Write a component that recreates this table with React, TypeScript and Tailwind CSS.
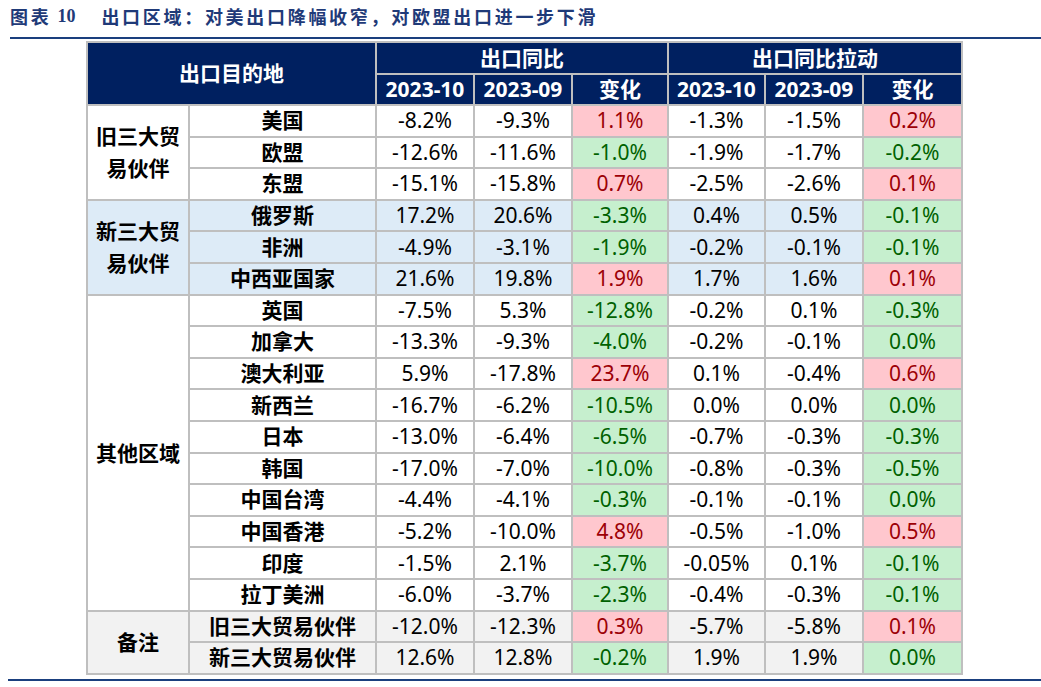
import React from "react";

type Tone = "up" | "down";
type Row = { name: string; v: [string, string, string, string, string, string]; t: [Tone, Tone] };

const up: Tone = "up";
const dn: Tone = "down";

const groups: { label: React.ReactNode; bg: string; rows: Row[] }[] = [
  {
    label: (
      <>
        旧三大贸
        <br />
        易伙伴
      </>
    ),
    bg: "bg-white",
    rows: [
      { name: "美国", v: ["-8.2%", "-9.3%", "1.1%", "-1.3%", "-1.5%", "0.2%"], t: [up, up] },
      { name: "欧盟", v: ["-12.6%", "-11.6%", "-1.0%", "-1.9%", "-1.7%", "-0.2%"], t: [dn, dn] },
      { name: "东盟", v: ["-15.1%", "-15.8%", "0.7%", "-2.5%", "-2.6%", "0.1%"], t: [up, up] },
    ],
  },
  {
    label: (
      <>
        新三大贸
        <br />
        易伙伴
      </>
    ),
    bg: "bg-[#ddebf7]",
    rows: [
      { name: "俄罗斯", v: ["17.2%", "20.6%", "-3.3%", "0.4%", "0.5%", "-0.1%"], t: [dn, dn] },
      { name: "非洲", v: ["-4.9%", "-3.1%", "-1.9%", "-0.2%", "-0.1%", "-0.1%"], t: [dn, dn] },
      { name: "中西亚国家", v: ["21.6%", "19.8%", "1.9%", "1.7%", "1.6%", "0.1%"], t: [up, up] },
    ],
  },
  {
    label: "其他区域",
    bg: "bg-white",
    rows: [
      { name: "英国", v: ["-7.5%", "5.3%", "-12.8%", "-0.2%", "0.1%", "-0.3%"], t: [dn, dn] },
      { name: "加拿大", v: ["-13.3%", "-9.3%", "-4.0%", "-0.2%", "-0.1%", "0.0%"], t: [dn, dn] },
      { name: "澳大利亚", v: ["5.9%", "-17.8%", "23.7%", "0.1%", "-0.4%", "0.6%"], t: [up, up] },
      { name: "新西兰", v: ["-16.7%", "-6.2%", "-10.5%", "0.0%", "0.0%", "0.0%"], t: [dn, dn] },
      { name: "日本", v: ["-13.0%", "-6.4%", "-6.5%", "-0.7%", "-0.3%", "-0.3%"], t: [dn, dn] },
      { name: "韩国", v: ["-17.0%", "-7.0%", "-10.0%", "-0.8%", "-0.3%", "-0.5%"], t: [dn, dn] },
      { name: "中国台湾", v: ["-4.4%", "-4.1%", "-0.3%", "-0.1%", "-0.1%", "0.0%"], t: [dn, dn] },
      { name: "中国香港", v: ["-5.2%", "-10.0%", "4.8%", "-0.5%", "-1.0%", "0.5%"], t: [up, up] },
      { name: "印度", v: ["-1.5%", "2.1%", "-3.7%", "-0.05%", "0.1%", "-0.1%"], t: [dn, dn] },
      { name: "拉丁美洲", v: ["-6.0%", "-3.7%", "-2.3%", "-0.4%", "-0.3%", "-0.1%"], t: [dn, dn] },
    ],
  },
  {
    label: "备注",
    bg: "bg-[#f2f2f2]",
    rows: [
      { name: "旧三大贸易伙伴", v: ["-12.0%", "-12.3%", "0.3%", "-5.7%", "-5.8%", "0.1%"], t: [up, up] },
      { name: "新三大贸易伙伴", v: ["12.6%", "12.8%", "-0.2%", "1.9%", "1.9%", "0.0%"], t: [dn, dn] },
    ],
  },
];

const cell = "border-2 border-[#bfbfbf] text-center align-middle p-0 whitespace-nowrap";

function ChangeCell({ value, tone }: { value: string; tone: Tone }) {
  const cls = tone === "up" ? "bg-[#ffc7ce] text-[#9c0006]" : "bg-[#c6efce] text-[#006100]";
  return <td className={`${cell} ${cls}`}>{value}</td>;
}

export default function App() {
  return (
    <div
      className="w-[1041px] h-[687px] bg-white overflow-hidden"
      style={{ fontFamily: '"Noto Sans", "Noto Sans CJK SC", sans-serif' }}
    >
      {/* Title */}
      <div className="h-[37px] pl-[10px] pt-[4px] flex items-start text-[18px] font-bold text-[#1f3a78] tracking-[2.7px] leading-[24px] font-['Noto_Sans_CJK_SC',sans-serif]">
        <span>图表</span>
        <span className="ml-[6px] font-['Liberation_Serif',serif] tracking-normal">10</span>
        <span className="ml-[26px]">出口区域：对美出口降幅收窄，对欧盟出口进一步下滑</span>
      </div>
      <div className="ml-[10px] h-[2px] bg-[#1a3f7e]" />

      <table className="ml-[86px] mt-[2px] border-collapse table-fixed text-[21px] leading-none text-black">
        <colgroup>
          <col className="w-[102px]" />
          <col className="w-[187px]" />
          <col className="w-[98px]" />
          <col className="w-[98px]" />
          <col className="w-[96px]" />
          <col className="w-[97px]" />
          <col className="w-[98px]" />
          <col className="w-[99px]" />
        </colgroup>
        <thead className="bg-[#002060] text-white font-bold">
          <tr className="h-[32px]">
            <th colSpan={2} rowSpan={2} className={cell}>
              出口目的地
            </th>
            <th colSpan={3} className={cell}>
              出口同比
            </th>
            <th colSpan={3} className={cell}>
              出口同比拉动
            </th>
          </tr>
          <tr className="h-[31px]">
            <th className={cell}>2023-10</th>
            <th className={cell}>2023-09</th>
            <th className={cell}>变化</th>
            <th className={cell}>2023-10</th>
            <th className={cell}>2023-09</th>
            <th className={cell}>变化</th>
          </tr>
        </thead>
        <tbody>
          {groups.map((g, gi) =>
            g.rows.map((r, ri) => (
              <tr key={`${gi}-${ri}`} className={`h-[31.6px] ${g.bg}`}>
                {ri === 0 && (
                  <td rowSpan={g.rows.length} className={`${cell} font-bold leading-[32px]`}>
                    {g.label}
                  </td>
                )}
                <td className={`${cell} font-bold`}>{r.name}</td>
                <td className={cell}>{r.v[0]}</td>
                <td className={cell}>{r.v[1]}</td>
                <ChangeCell value={r.v[2]} tone={r.t[0]} />
                <td className={cell}>{r.v[3]}</td>
                <td className={cell}>{r.v[4]}</td>
                <ChangeCell value={r.v[5]} tone={r.t[1]} />
              </tr>
            ))
          )}
        </tbody>
      </table>

      <div className="ml-[8px] mt-[4px] h-[2px] bg-[#1a3f7e]" />
    </div>
  );
}
